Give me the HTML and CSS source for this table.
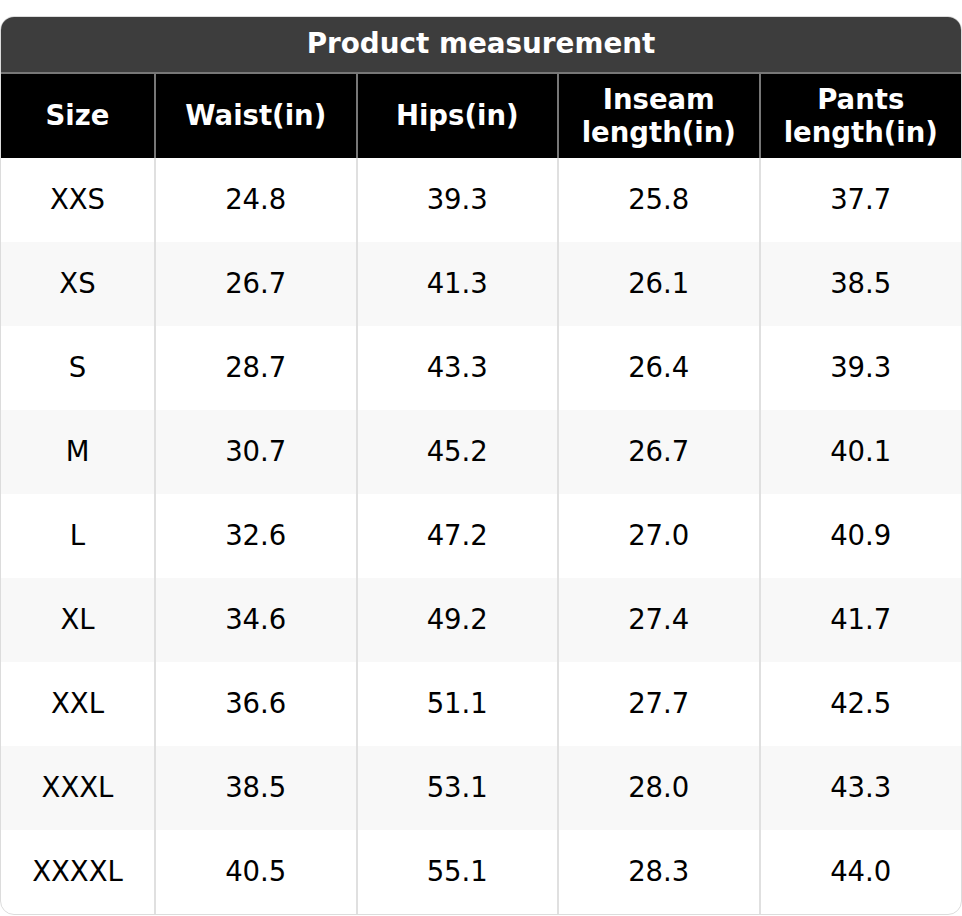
FILE: index.html
```html
<!DOCTYPE html>
<html>
<head>
<meta charset="utf-8">
<link rel="stylesheet" href="styles.css">
</head>
<body>
<div class="card">
  <div class="title">Product measurement</div>
  <table class="sizes">
    <colgroup>
      <col class="c-size"><col class="c-num"><col class="c-num"><col class="c-num"><col class="c-num">
    </colgroup>
    <thead>
      <tr><th>Size</th><th>Waist(in)</th><th>Hips(in)</th><th>Inseam<br>length(in)</th><th>Pants<br>length(in)</th></tr>
    </thead>
    <tbody>
      <tr><td>XXS</td><td>24.8</td><td>39.3</td><td>25.8</td><td>37.7</td></tr>
      <tr><td>XS</td><td>26.7</td><td>41.3</td><td>26.1</td><td>38.5</td></tr>
      <tr><td>S</td><td>28.7</td><td>43.3</td><td>26.4</td><td>39.3</td></tr>
      <tr><td>M</td><td>30.7</td><td>45.2</td><td>26.7</td><td>40.1</td></tr>
      <tr><td>L</td><td>32.6</td><td>47.2</td><td>27.0</td><td>40.9</td></tr>
      <tr><td>XL</td><td>34.6</td><td>49.2</td><td>27.4</td><td>41.7</td></tr>
      <tr><td>XXL</td><td>36.6</td><td>51.1</td><td>27.7</td><td>42.5</td></tr>
      <tr><td>XXXL</td><td>38.5</td><td>53.1</td><td>28.0</td><td>43.3</td></tr>
      <tr><td>XXXXL</td><td>40.5</td><td>55.1</td><td>28.3</td><td>44.0</td></tr>
    </tbody>
  </table>
</div>
</body>
</html>
```
FILE: styles.css
```css
html, body {
  margin: 0;
  padding: 0;
  background: #ffffff;
}
body {
  font-family: "DejaVu Sans", Verdana, sans-serif;
  font-size: 27.5px;
  color: #000;
}
.card {
  margin-top: 16px;
  width: 962px;
  box-sizing: border-box;
  border: 1px solid #dcdcdc;
  border-radius: 14px;
  overflow: hidden;
}
.title {
  height: 55px;
  background: #3d3d3d;
  color: #fff;
  font-size: 27.8px;
  font-weight: bold;
  text-align: center;
  line-height: 53px;
  border-bottom: 2px solid #777;
}
.sizes {
  width: 100%;
  border-collapse: collapse;
  table-layout: fixed;
}
.c-size { width: 154px; }
.sizes th {
  height: 83px;
  padding: 0 0 1px;
  background: #000;
  color: #fff;
  font-weight: bold;
  line-height: 33px;
  border-left: 2px solid #777;
  vertical-align: middle;
}
.sizes th:first-child { border-left: none; }
.sizes td {
  height: 82px;
  padding: 0 0 2px;
  text-align: center;
  vertical-align: middle;
  border-left: 2px solid #e0e0e0;
}
.sizes td:first-child { border-left: none; }
.sizes tbody tr:nth-child(even) td { background: #f8f8f8; }
```
